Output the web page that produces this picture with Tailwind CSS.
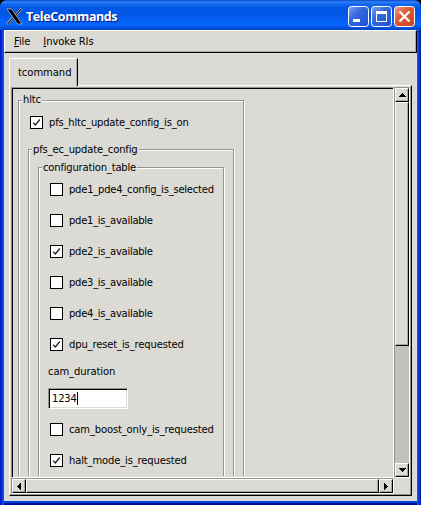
<!DOCTYPE html>
<html lang="en">
<head>
<meta charset="utf-8">
<title>TeleCommands</title>
<script src="https://cdn.jsdelivr.net/npm/@tailwindcss/browser@4"></script>
</head>
<body class="bg-black overflow-hidden">
<div class="w-[421px] h-[505px] flex flex-col overflow-hidden rounded-t-[7px] bg-[#0441dc] font-[family-name:'DejaVu_Sans',sans-serif] text-[10px] leading-[12px] text-black whitespace-nowrap">
  <header class="h-[30px] shrink-0 flex items-center pl-[6px] pr-[6px] bg-[linear-gradient(180deg,#0a47c6_0px,#2f80f8_2px,#1268ee_4px,#0257e4_8px,#0055e5_14px,#0560f6_20px,#0465ff_25px,#0357e6_27px,#0144c4_30px)]">
    <svg class="w-[17px] h-[17px] mt-[2px]" viewBox="0 0 17 17"><path d="M15.500 .8L9.700 7.500M7 9.800L1.200 16" stroke="#b4b8c0" stroke-width="2.400"/><path d="M15.300 1L9.700 7.500M7 10L1.500 16" stroke="#000" stroke-width="1.100"/><path d="M1 1h4.500l10.500 15h-4.500z" fill="#000" stroke="#b4b8c0" stroke-width=".8"/></svg>
    <h1 class="ml-[3px] mt-[4px] font-[family-name:'Open_Sans','Noto_Sans',sans-serif] font-bold text-[12.5px] tracking-[-0.4px] leading-[16px] text-white [text-shadow:1px_1px_0_#0a1883]">TeleCommands</h1>
    <div class="ml-auto mt-[3px] flex gap-[2px]">
      <svg class="w-[21px] h-[21px]" viewBox="0 0 21 21"><defs><linearGradient id="b" x2="1" y2="1"><stop stop-color="#7da3f2"/><stop offset=".4" stop-color="#3567dc"/><stop offset="1" stop-color="#1d50d5"/></linearGradient><linearGradient id="r" x2="1" y2="1"><stop stop-color="#f0a08c"/><stop offset=".4" stop-color="#e05b38"/><stop offset="1" stop-color="#c9421a"/></linearGradient></defs><rect x=".5" y=".5" width="20" height="20" rx="3" fill="url(#b)" stroke="#fff"/><path d="M5 13h7v3H5z" fill="#fff"/></svg>
      <svg class="w-[21px] h-[21px]" viewBox="0 0 21 21"><rect x=".5" y=".5" width="20" height="20" rx="3" fill="url(#b)" stroke="#fff"/><path d="M5 5h11v11H5zM6 8v7h9V8z" fill="#fff" fill-rule="evenodd"/></svg>
      <svg class="w-[21px] h-[21px]" viewBox="0 0 21 21"><rect x=".5" y=".5" width="20" height="20" rx="3" fill="url(#r)" stroke="#fff"/><path d="M5.500 5.500l10 10M15.500 5.500l-10 10" stroke="#fff" stroke-width="2.200"/></svg>
    </div>
  </header>
  <div class="flex-1 px-1 pb-1 bg-[linear-gradient(90deg,#0010c8_0px,#0838d8_2px,#1560ef_4px,#0441dc_5px,#0441dc_416px,#1560ef_417px,#0838d8_419px,#000d98_421px)]">
    <div class="h-[471px] bg-[#dcdad5] flex flex-col shadow-[0_2px_0_#0441dc,0_4px_0_#000d98]">
      <nav class="h-[23px] shrink-0 flex items-center gap-[13px] pl-[9px] border border-t-white border-l-white border-r-black border-b-black shadow-[inset_-1px_-1px_0_#a9a8a2]">
        <span class="tracking-[-0.1px]"><u class="underline-offset-1">F</u>ile</span><span class="tracking-[-0.1px]"><u class="underline-offset-1">I</u>nvoke RIs</span>
      </nav>
      <main class="pt-[5px] pl-[5px] flex flex-col">
        <div class="relative z-10 w-[69px] h-[28px] pl-[8px] pt-[8px] border-t border-l border-r border-t-white border-l-white border-r-black shadow-[inset_-1px_0_0_#a9a8a2] bg-[#dcdad5]"><span class="tracking-[-0.05px]">tcommand</span></div>
        <section class="-mt-px w-[403px] h-[411px] border border-t-white border-l-white border-r-black border-b-black shadow-[inset_-1px_-1px_0_#96948e] pl-px pt-px grid grid-cols-[383px_16px] grid-rows-[391px_16px]">
          <div class="border border-t-[#96948e] border-l-[#96948e] border-r-white border-b-white shadow-[inset_1px_1px_0_#000] overflow-hidden h-[391px] pt-[2px] pl-[6px]">
            <!-- clip the form just above the viewport's lower edge -->
            <div class="h-[386px] pt-[10px] overflow-hidden tracking-[-0.19px]">
              <div class="w-[226px] h-[500px] border border-[#96948e] shadow-[1px_1px_0_#fff,inset_1px_1px_0_#fff] pl-[9px] flex flex-col relative">
                <div class="h-[15px] shrink-0"></div>
                <label class="flex items-center gap-[6px] h-[13px] pl-[2px]"><i class="size-[13px] border border-black bg-white shrink-0"><svg class="size-[11px]" viewBox="0 0 11 11"><path d="M2.200 5.800l2.200 2.200L8.800 2.500" fill="none" stroke="#222" stroke-width="1.300"/></svg></i>pfs_hltc_update_config_is_on</label>
                <div class="mt-[20px] w-[206px] h-[440px] shrink-0 border border-[#96948e] shadow-[1px_1px_0_#fff,inset_1px_1px_0_#fff] pl-[9px]">
                  <div class="-mt-[6px] -ml-[6px] w-fit h-[12px] px-px bg-[#dcdad5] relative tracking-[-0.15px]">pfs_ec_update_config</div>
                  <div class="mt-[11px] w-[186px] h-[400px] border border-[#96948e] shadow-[1px_1px_0_#fff,inset_1px_1px_0_#fff] pl-[9px]">
                    <div class="-mt-[6px] -ml-[6px] w-fit h-[12px] px-px bg-[#dcdad5] relative">configuration_table</div>
                    <div class="mt-[9px] pl-[2px] flex flex-col gap-[18px]">
                      <label class="flex items-center gap-[6px] h-[13px] tracking-[-0.23px]"><i class="size-[13px] border border-black bg-white shrink-0"></i>pde1_pde4_config_is_selected</label>
                      <label class="flex items-center gap-[6px] h-[13px] tracking-[-0.27px]"><i class="size-[13px] border border-black bg-white shrink-0"></i>pde1_is_available</label>
                      <label class="flex items-center gap-[6px] h-[13px] tracking-[-0.27px]"><i class="size-[13px] border border-black bg-white shrink-0"><svg class="size-[11px]" viewBox="0 0 11 11"><path d="M2.200 5.800l2.200 2.200L8.800 2.500" fill="none" stroke="#222" stroke-width="1.300"/></svg></i>pde2_is_available</label>
                      <label class="flex items-center gap-[6px] h-[13px] tracking-[-0.27px]"><i class="size-[13px] border border-black bg-white shrink-0"></i>pde3_is_available</label>
                      <label class="flex items-center gap-[6px] h-[13px] tracking-[-0.27px]"><i class="size-[13px] border border-black bg-white shrink-0"></i>pde4_is_available</label>
                      <label class="flex items-center gap-[6px] h-[13px] tracking-[-0.14px]"><i class="size-[13px] border border-black bg-white shrink-0"><svg class="size-[11px]" viewBox="0 0 11 11"><path d="M2.200 5.800l2.200 2.200L8.800 2.500" fill="none" stroke="#222" stroke-width="1.300"/></svg></i>dpu_reset_is_requested</label>
                    </div>
                    <p class="mt-[15px] h-[12px] tracking-[-0.1px]">cam_duration</p>
                    <div class="mt-[10px] w-[80px] h-[21px] bg-white border border-t-[#96948e] border-l-[#96948e] border-r-white border-b-white shadow-[inset_1px_1px_0_#000,inset_-1px_-1px_0_#dcdad5] pl-[3px] flex items-center">1234<i class="w-px h-[13px] bg-black"></i></div>
                    <div class="mt-[14px] pl-[2px] flex flex-col gap-[18px] tracking-[-0.15px]">
                      <label class="flex items-center gap-[6px] h-[13px]"><i class="size-[13px] border border-black bg-white shrink-0"></i>cam_boost_only_is_requested</label>
                      <label class="flex items-center gap-[6px] h-[13px]"><i class="size-[13px] border border-black bg-white shrink-0"><svg class="size-[11px]" viewBox="0 0 11 11"><path d="M2.200 5.800l2.200 2.200L8.800 2.500" fill="none" stroke="#222" stroke-width="1.300"/></svg></i>halt_mode_is_requested</label>
                    </div>
                  </div>
                </div>
                <div class="absolute left-[3px] -top-[7px] px-px bg-[#dcdad5]">hltc</div>
              </div>
            </div>
          </div>
          <div class="h-[391px] w-[16px] border border-t-[#96948e] border-l-[#96948e] border-r-white border-b-white bg-[#c3c2bc] flex flex-col">
            <div class="h-[14px] border border-t-white border-l-white border-r-black border-b-black bg-[#dcdad5] shadow-[inset_-1px_-1px_0_#a9a8a2] grid place-items-center"><svg class="w-[7px] h-[4px]" viewBox="0 0 7 4" shape-rendering="crispEdges"><path d="M3 0h1v1h1v1h1v1h1v1H0V3h1V2h1V1h1z"/></svg></div>
            <div class="h-[244px] border border-t-white border-l-white border-r-black border-b-black bg-[#dcdad5] shadow-[inset_-1px_-1px_0_#a9a8a2]"></div>
            <div class="mt-auto h-[14px] border border-t-white border-l-white border-r-black border-b-black bg-[#dcdad5] shadow-[inset_-1px_-1px_0_#a9a8a2] grid place-items-center"><svg class="w-[7px] h-[4px]" viewBox="0 0 7 4" shape-rendering="crispEdges"><path d="M0 0h7v1H6v1H5v1H4v1H3V3H2V2H1V1H0z"/></svg></div>
          </div>
          <div class="h-[16px] w-[383px] border border-t-[#96948e] border-l-[#96948e] border-r-white border-b-white flex">
            <div class="w-[14px] border border-t-white border-l-white border-r-black border-b-black shadow-[inset_-1px_-1px_0_#a9a8a2] grid place-items-center"><svg class="w-[4px] h-[7px]" viewBox="0 0 4 7" shape-rendering="crispEdges"><path d="M4 0v7H3V6H2V5H1V4H0V3h1V2h1V1h1V0z"/></svg></div>
            <div class="w-[353px] border border-t-white border-l-white border-r-black border-b-black shadow-[inset_-1px_-1px_0_#a9a8a2]"></div>
            <div class="w-[14px] border border-t-white border-l-white border-r-black border-b-black shadow-[inset_-1px_-1px_0_#a9a8a2] grid place-items-center"><svg class="w-[4px] h-[7px]" viewBox="0 0 4 7" shape-rendering="crispEdges"><path d="M0 0h1v1h1v1h1v1h1v1H3v1H2v1H1v1H0z"/></svg></div>
          </div>
        </section>
      </main>
    </div>
  </div>
</div>
</body>
</html>
